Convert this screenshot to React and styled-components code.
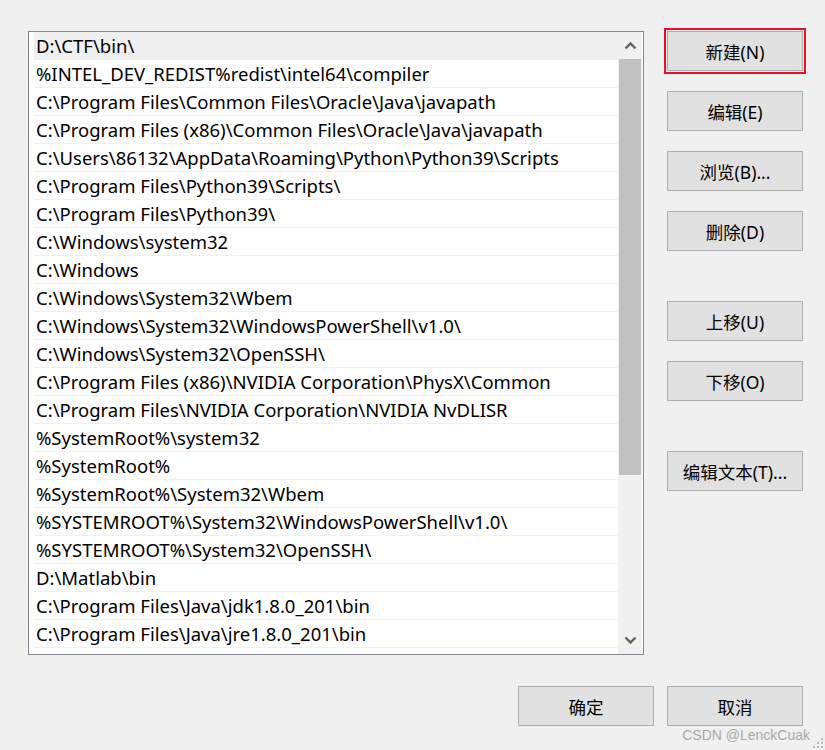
import React from 'react'
import styled, { createGlobalStyle } from 'styled-components'

const Global = createGlobalStyle`
  html, body {
    margin: 0;
    padding: 0;
    background: #f0f0f0;
  }
  body {
    font-family: "Noto Sans", "Noto Sans CJK SC", sans-serif;
  }
`

const Dialog = styled.div`
  position: relative;
  width: 825px;
  height: 750px;
  background: #f0f0f0;
  box-sizing: border-box;
  padding: 31px 0 0 28px;
`
const Top = styled.div`
  display: flex;
  align-items: flex-start;
`
const ListBox = styled.div`
  width: 616px;
  height: 624px;
  box-sizing: border-box;
  border: 1px solid #828790;
  background: #fff;
  display: flex;
  overflow: hidden;
`
const Rows = styled.div`
  flex: 1;
  padding-left: 5px;
  display: flex;
  flex-direction: column;
`
const Row = styled.div`
  height: 28px;
  box-sizing: border-box;
  border-bottom: 1px solid #f0f0f0;
  background: ${p => (p.$active ? '#f0f0f0' : '#fff')};
  padding-left: 2px;
  font-family: "Noto Sans", "Noto Sans CJK SC", sans-serif;
  font-size: 18.5px;
  line-height: 27px;
  color: #000;
  white-space: nowrap;
  overflow: hidden;
`
const Scroll = styled.div`
  width: 24px;
  margin-right: 1px;
  background: #f0f0f0;
  display: flex;
  flex-direction: column;
`
const Arrow = styled.div`
  height: 27px;
  display: flex;
  align-items: center;
  justify-content: center;
`
const Track = styled.div`
  flex: 1;
  display: flex;
  flex-direction: column;
`
const Thumb = styled.div`
  height: 416px;
  margin: 0 1px;
  background: #c1c1c1;
`
const Side = styled.div`
  margin-left: 23px;
  display: flex;
  flex-direction: column;
`
const Btn = styled.button`
  width: 136px;
  height: 40px;
  box-sizing: border-box;
  border: 1px solid #adadad;
  background: #e1e1e1;
  color: #000;
  font-family: "Noto Sans", "Noto Sans CJK SC", sans-serif;
  font-size: 17.5px;
  padding: 0;
  margin-top: ${p => p.$gap || 0}px;
  outline: ${p => (p.$focus ? '2px solid #e81123' : 'none')};
  outline-offset: 1px;
`
const Bottom = styled.div`
  display: flex;
  gap: 13px;
  margin: 31px 0 0 490px;
`
const Mark = styled.div`
  position: absolute;
  right: 15px;
  bottom: 7px;
  font-family: "Liberation Sans", Arial, sans-serif;
  font-size: 14px;
  color: #a8a8a8;
`
const Grip = styled.svg`
  position: absolute;
  right: 1px;
  bottom: 1px;
`

const paths = [
  'D:\\CTF\\bin\\',
  '%INTEL_DEV_REDIST%redist\\intel64\\compiler',
  'C:\\Program Files\\Common Files\\Oracle\\Java\\javapath',
  'C:\\Program Files (x86)\\Common Files\\Oracle\\Java\\javapath',
  'C:\\Users\\86132\\AppData\\Roaming\\Python\\Python39\\Scripts',
  'C:\\Program Files\\Python39\\Scripts\\',
  'C:\\Program Files\\Python39\\',
  'C:\\Windows\\system32',
  'C:\\Windows',
  'C:\\Windows\\System32\\Wbem',
  'C:\\Windows\\System32\\WindowsPowerShell\\v1.0\\',
  'C:\\Windows\\System32\\OpenSSH\\',
  'C:\\Program Files (x86)\\NVIDIA Corporation\\PhysX\\Common',
  'C:\\Program Files\\NVIDIA Corporation\\NVIDIA NvDLISR',
  '%SystemRoot%\\system32',
  '%SystemRoot%',
  '%SystemRoot%\\System32\\Wbem',
  '%SYSTEMROOT%\\System32\\WindowsPowerShell\\v1.0\\',
  '%SYSTEMROOT%\\System32\\OpenSSH\\',
  'D:\\Matlab\\bin',
  'C:\\Program Files\\Java\\jdk1.8.0_201\\bin',
  'C:\\Program Files\\Java\\jre1.8.0_201\\bin',
]

const Chevron = ({ up }) => (
  <svg width="13" height="9" viewBox="0 0 13 9">
    <path
      d={up ? 'M1.5 7.5 L6.5 2.5 L11.5 7.5' : 'M1.5 1.5 L6.5 6.5 L11.5 1.5'}
      fill="none"
      stroke="#606060"
      strokeWidth="2.4"
    />
  </svg>
)

export default function App() {
  return (
    <Dialog>
      <Global />
      <Top>
        <ListBox>
          <Rows>
            {paths.map((p, i) => (
              <Row key={i} $active={i === 0}>{p}</Row>
            ))}
          </Rows>
          <Scroll>
            <Arrow><Chevron up /></Arrow>
            <Track><Thumb /></Track>
            <Arrow><Chevron /></Arrow>
          </Scroll>
        </ListBox>
        <Side>
          <Btn $focus>新建(N)</Btn>
          <Btn $gap={20}>编辑(E)</Btn>
          <Btn $gap={20}>浏览(B)...</Btn>
          <Btn $gap={20}>删除(D)</Btn>
          <Btn $gap={50}>上移(U)</Btn>
          <Btn $gap={20}>下移(O)</Btn>
          <Btn $gap={50}>编辑文本(T)...</Btn>
        </Side>
      </Top>
      <Bottom>
        <Btn>确定</Btn>
        <Btn>取消</Btn>
      </Bottom>
      <Mark>CSDN @LenckCuak</Mark>
      <Grip width="12" height="12" viewBox="0 0 12 12">
        {[[8, 0], [4, 4], [8, 4], [0, 8], [4, 8], [8, 8]].map(([x, y], i) => (
          <rect key={i} x={x + 1} y={y + 1} width="2" height="2" fill="#bcbcbc" />
        ))}
      </Grip>
    </Dialog>
  )
}
